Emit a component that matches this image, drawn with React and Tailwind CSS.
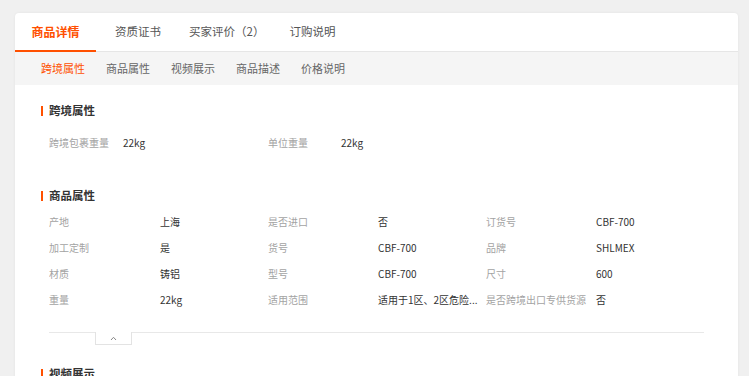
import React from "react";

const font = { fontFamily: '"Noto Sans CJK SC", "Liberation Sans", sans-serif' };

function Heading({ children }) {
  return (
    <div className="flex items-center h-[20px] pl-[26px]">
      <span className="w-[2px] h-[10px] bg-[#ff5000]" />
      <span className="ml-[6px] text-[11.5px] font-bold text-[#333]">{children}</span>
    </div>
  );
}

function Cell({ label, value, lw, vw }) {
  return (
    <>
      <div className="text-[#a3a3a3] whitespace-nowrap overflow-hidden" style={{ width: lw }}>{label}</div>
      <div className="text-[#333] whitespace-nowrap" style={{ width: vw }}>{value}</div>
    </>
  );
}

const rows2 = [
  [["产地", "上海"], ["是否进口", "否"], ["订货号", "CBF-700"]],
  [["加工定制", "是"], ["货号", "CBF-700"], ["品牌", "SHLMEX"]],
  [["材质", "铸铝"], ["型号", "CBF-700"], ["尺寸", "600"]],
  [["重量", "22kg"], ["适用范围", "适用于1区、2区危险..."], ["是否跨境出口专供货源", "否"]],
];

export default function App() {
  return (
    <div className="w-[749px] h-[376px] overflow-hidden bg-[#f0f0f0] pt-[13px]" style={font}>
      <div className="ml-[15px] w-[723px] bg-white rounded-t-[4px] shadow-[0_0_3px_rgba(0,0,0,0.06)] h-[400px]">
        {/* top tabs */}
        <div className="flex items-stretch h-[39px] border-b border-[#e6e6e6]">
          <div className="relative w-[81px] flex items-center justify-center text-[12px] font-bold text-[#ff5000]">
            商品详情
            <span className="absolute left-0 right-0 bottom-[-1px] h-[2px] bg-[#ff5000]" />
          </div>
          <div className="flex items-center ml-[19px] text-[11.5px] text-[#555]">资质证书</div>
          <div className="flex items-center ml-[28px] text-[11.5px] text-[#555]">买家评价（2）</div>
          <div className="flex items-center ml-[25px] text-[11.5px] text-[#555]">订购说明</div>
        </div>
        {/* sub tabs */}
        <div className="flex items-center h-[33px] bg-[#f5f5f5] pl-[26px] gap-[21px] text-[11px] text-[#666]">
          <span className="text-[#ff5000]">跨境属性</span>
          <span>商品属性</span>
          <span>视频展示</span>
          <span>商品描述</span>
          <span>价格说明</span>
        </div>
        {/* content */}
        <div className="pt-[16px]">
          <Heading>跨境属性</Heading>
          <div className="mt-[8px] ml-[34px] flex items-center h-[26px] text-[10px]">
            <Cell label="跨境包裹重量" value="22kg" lw={74} vw={145} />
            <Cell label="单位重量" value="22kg" lw={73} vw={100} />
          </div>

          <div className="mt-[31px]">
            <Heading>商品属性</Heading>
          </div>
          <div className="mt-[2px] ml-[34px]">
            {rows2.map((r, i) => (
              <div key={i} className="flex items-center h-[26px] text-[10px]">
                <Cell label={r[0][0]} value={r[0][1]} lw={111} vw={108} />
                <Cell label={r[1][0]} value={r[1][1]} lw={110} vw={108} />
                <Cell label={r[2][0]} value={r[2][1]} lw={110} vw={100} />
              </div>
            ))}
          </div>

          <div className="mt-[20px] mx-[34px] border-t border-[#e8e8e8] relative">
            <div className="absolute left-[46px] top-[-1px] w-[37px] h-[13px] bg-white border-x border-b border-[#e3e3e3] flex items-center justify-center">
              <svg width="7" height="5" viewBox="0 0 7 5">
                <polyline points="1,4 3.5,1.3 6,4" fill="none" stroke="#888" strokeWidth="1" />
              </svg>
            </div>
          </div>

          <div className="mt-[31px]">
            <Heading>视频展示</Heading>
          </div>
        </div>
      </div>
    </div>
  );
}
